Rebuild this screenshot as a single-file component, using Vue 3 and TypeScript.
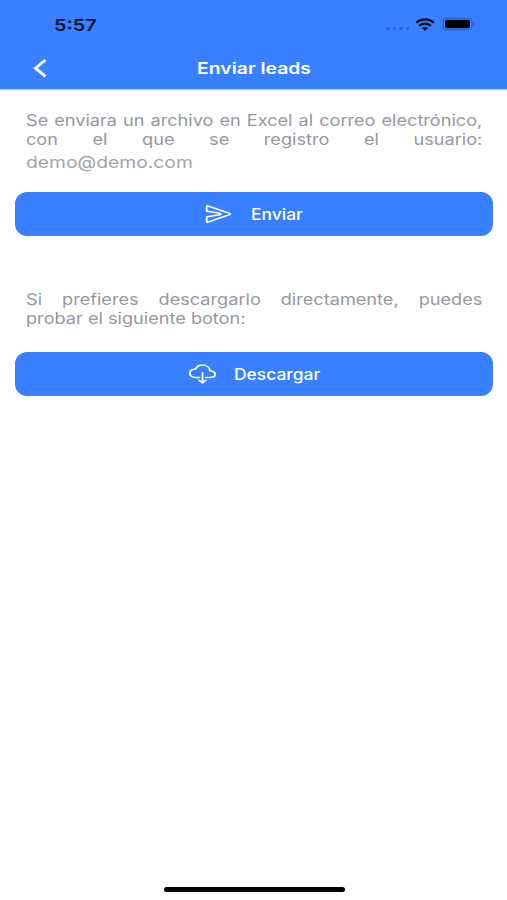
<script setup lang="ts">
const time = '5:57'
const title = 'Enviar leads'
const email = 'demo@demo.com'
const signalDots = [0, 1, 2, 3]
</script>

<template>
  <div class="screen">
    <header class="header">
      <div class="status">
        <span class="time">{{ time }}</span>
        <div class="indicators">
          <div class="signal"><i v-for="dot in signalDots" :key="dot" /></div>
          <svg class="wifi" viewBox="0 0 20 13" preserveAspectRatio="none">
            <path d="M1.2 4.7C6.1.3 13.9.3 18.8 4.7" />
            <path d="M4.3 7.7c3.2-2.8 8.2-2.8 11.4 0" />
            <path class="solid" d="M6.8 10c1.8-1.4 4.6-1.4 6.4 0L10 12.8z" />
          </svg>
          <svg class="battery" viewBox="0 0 34 14">
            <rect class="shell" x="1" y="1" width="29" height="12" rx="3.5" />
            <rect x="3" y="2.7" width="25" height="8.6" rx="2" />
            <path class="cap" d="M31.4 5c1.7.4 1.7 3.6 0 4z" />
          </svg>
        </div>
      </div>
      <nav class="toolbar">
        <button class="back" aria-label="Volver">
          <svg viewBox="0 0 14 20"><path d="M12.5 2 2.5 10.2 12.5 18.4" /></svg>
        </button>
        <h1 class="title"><span>{{ title }}</span></h1>
      </nav>
    </header>

    <main class="content">
      <div class="copy first">
        <p class="full">Se enviara un archivo en Excel al correo electrónico, con el que se registro el usuario:</p>
        <p class="email">{{ email }}</p>
      </div>
      <button class="action send">
        <svg viewBox="0 0 512 512" preserveAspectRatio="none">
          <path d="M470.3 271.15L43.16 447.31a7.83 7.83 0 01-11.16-7V327a8 8 0 016.51-7.86l247.62-47c17.36-3.29 17.36-28.15 0-31.44l-247.63-47a8 8 0 01-6.5-7.85V72.59c0-5.74 5.88-10.26 11.16-8L470.3 241.76a16 16 0 010 29.39z" />
        </svg>
        <span>Enviar</span>
      </button>
      <div class="copy second">
        <p>Si prefieres descargarlo directamente, puedes probar el siguiente boton:</p>
      </div>
      <button class="action download">
        <svg viewBox="0 0 512 512" preserveAspectRatio="none">
          <path d="M320 336h76c55 0 100-21.21 100-75.6s-53-73.47-96-75.6C391.11 99.74 329 48 256 48c-69 0-113.44 45.79-128 91.2-60 5.7-112 35.88-112 98.4S70 336 136 336h56M192 400.1l64 63.9 64-63.9M256 224v224.03" />
        </svg>
        <span>Descargar</span>
      </button>
    </main>

    <footer class="home"><div class="home-bar" /></footer>
  </div>
</template>

<style>
body {
  margin: 0;
  background: #fff;
}
</style>

<style scoped>
.screen {
  display: flex;
  flex-direction: column;
  height: 900px;
  overflow: hidden;
  background: #fff;
  font-family: Inter, "Liberation Sans", sans-serif;
}
.header {
  flex: none;
  height: 90px;
  box-sizing: border-box;
  background: #3880ff;
  border-bottom: 1px solid #a9caff;
}
.status {
  display: flex;
  justify-content: space-between;
  align-items: center;
  height: 48px;
  padding: 0 31px 0 54px;
}
.time {
  padding-top: 2px;
  font-size: 16.5px;
  font-weight: 600;
  color: #06122b;
  transform: scaleX(1.2);
  transform-origin: left;
}
.indicators {
  display: flex;
  align-items: center;
}
.signal {
  display: flex;
  gap: 3px;
  margin: 9px 6px 0 0;
}
.signal i {
  width: 3.5px;
  height: 3px;
  border-radius: 50%;
  background: #2d66cf;
}
.wifi {
  width: 20px;
  height: 13px;
  margin-right: 7px;
  fill: none;
  stroke: #030914;
  stroke-width: 2.1;
}
.wifi .solid {
  fill: #030914;
  stroke: none;
}
.battery {
  width: 34px;
  height: 14px;
}
.battery .shell {
  fill: none;
  stroke: #2861c4;
  stroke-width: 1.2;
}
.battery .cap {
  fill: #2861c4;
}
.toolbar {
  display: flex;
  align-items: center;
  height: 40px;
}
.back {
  display: flex;
  width: 14px;
  padding: 0;
  margin-left: 33px;
  border: 0;
  background: none;
}
.back svg {
  width: 14px;
  height: 20px;
  fill: none;
  stroke: #fff;
  stroke-width: 2.9;
}
.title {
  flex: 1;
  margin: 0 46px 0 0;
  text-align: center;
  font-size: 16px;
  font-weight: 600;
  line-height: 20px;
  color: #fff;
}
.title span {
  display: inline-block;
  transform: scaleX(1.21);
}
.content {
  flex: 1;
  padding: 0 14px 0 15px;
}
.copy {
  width: 390px;
  margin-left: 11px;
  transform: scaleX(1.17);
  transform-origin: left top;
  color: #96989d;
}
.copy p {
  margin: 0;
  font-size: 15.5px;
  line-height: 19.5px;
  text-align: justify;
}
.copy .full {
  text-align-last: justify;
}
.copy .email {
  margin-top: 1px;
  font-size: 16.5px;
  line-height: 22px;
  color: #a3a4a8;
}
.first {
  height: 82px;
  padding-top: 20.5px;
  margin-bottom: -0.5px;
}
.action {
  display: flex;
  align-items: center;
  justify-content: flex-start;
  width: 100%;
  height: 44px;
  border: 0;
  border-radius: 12px;
  background: #3880ff;
  color: #fff;
  font-family: inherit;
  font-size: 15.5px;
  font-weight: 500;
}
.action svg {
  width: 27px;
  height: 22px;
  flex: none;
  fill: none;
  stroke: #fff;
  stroke-width: 34;
  stroke-linecap: round;
  stroke-linejoin: round;
}
.action span {
  margin-left: 19px;
  transform: scaleX(1.125);
  transform-origin: left;
}
.send {
  padding: 0 0 0 190px;
}
.download {
  padding: 0 0 0 173.5px;
}
.download span {
  margin-left: 18px;
}
.second {
  height: 62px;
  padding-top: 54px;
}
.second p {
  line-height: 19px;
}
.home {
  display: flex;
  justify-content: center;
  align-items: flex-end;
  height: 13px;
  padding: 0 0 8px 1px;
}
.home-bar {
  width: 181px;
  height: 5px;
  border-radius: 3px;
  background: #000;
}
</style>
